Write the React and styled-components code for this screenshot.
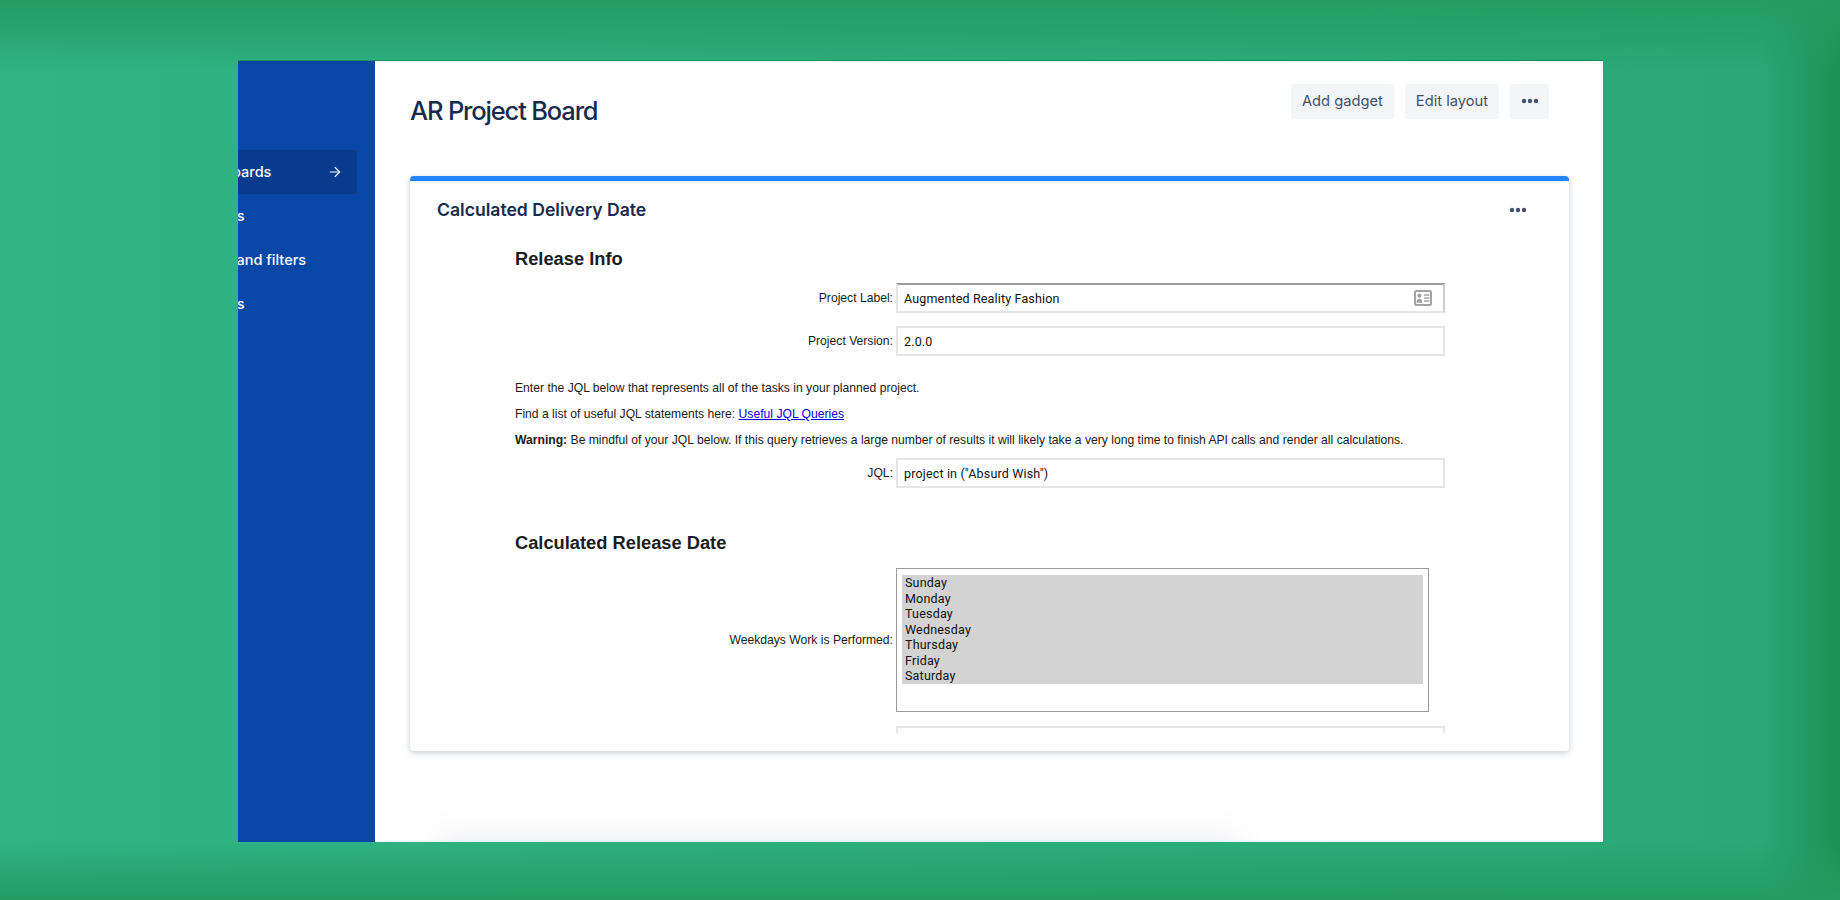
import styled, { createGlobalStyle } from 'styled-components';
import { ArrowRight } from 'lucide-react';

const GlobalStyle = createGlobalStyle`
  html, body {
    margin: 0;
    padding: 0;
  }
  * {
    box-sizing: border-box;
  }
`;

const Backdrop = styled.div`
  width: 1840px;
  height: 900px;
  overflow: hidden;
  padding: 61px 237px 58px 238px;
  background:
    linear-gradient(180deg, #229c62 0, rgba(34, 156, 98, 0) 72px),
    linear-gradient(0deg, #229c62 0, rgba(34, 156, 98, 0) 58px),
    linear-gradient(270deg, #1b9156 0, rgba(27, 145, 86, 0) 80px),
    linear-gradient(90deg, #30b385 0, #2ba876 100%);
`;

const Window = styled.div`
  height: 781px;
  display: flex;
  box-shadow: 0 -1px 0 rgba(20, 120, 70, 0.6);
`;

const Sidebar = styled.nav`
  width: 137px;
  flex: none;
  overflow: hidden;
  background: #0847a6;
  padding: 89px 18px 0 0;
`;

const NavRow = styled.div`
  height: 44px;
  margin-left: -67px;
  padding: 0 14px 1px 17px;
  display: flex;
  align-items: center;
  justify-content: space-between;
  border-radius: 3px;
  color: #fff;
  font: 500 14.5px "Inter", sans-serif;
  white-space: nowrap;
  background: ${props => (props.$active ? '#073b8e' : 'transparent')};
`;

const Main = styled.main`
  flex: 1;
  background: #fff;
  padding: 0 34px 0 35px;
  overflow: hidden;
`;

const Header = styled.header`
  height: 115px;
  display: flex;
  justify-content: space-between;
  padding-top: 23px;
`;

const Title = styled.h1`
  margin: 0;
  font: 500 25.5px/54px "Inter", sans-serif;
  letter-spacing: -1.17px;
  color: #172b4d;
`;

const Actions = styled.div`
  display: flex;
  gap: 11px;
  padding-right: 20px;
`;

const Button = styled.button`
  height: 35px;
  border: 0;
  border-radius: 3px;
  padding: 0 ${props => (props.$icon ? '0' : '11px')} 2px;
  width: ${props => (props.$icon ? '39px' : 'auto')};
  display: flex;
  align-items: center;
  justify-content: center;
  background: #f4f5f7;
  color: #42526e;
  font: 400 14.7px "Inter", sans-serif;
`;

const Card = styled.section`
  height: 575px;
  border-top: 5px solid #2684ff;
  border-radius: 4px;
  background: #fff;
  box-shadow: 0 2px 6px rgba(9, 30, 66, 0.22);
  padding: 0 27px 18px;
  display: flex;
  flex-direction: column;
`;

const CardHeader = styled.div`
  height: 57px;
  flex: none;
  display: flex;
  align-items: center;
  justify-content: space-between;
  padding-right: 15px;
`;

const CardTitle = styled.h2`
  margin: 0;
  font: 600 17.6px "Inter", sans-serif;
  color: #172b4d;
`;

const Gadget = styled.div`
  flex: 1;
  overflow: hidden;
  padding: 9px 0 0 78px;
  font: 12.15px "Liberation Sans", sans-serif;
  color: #1a1a1a;
`;

const SectionTitle = styled.h3`
  margin: 0 0 ${props => props.$after || 12}px 0;
  font: 700 18.3px/24px "Liberation Sans", sans-serif;
  color: #1c1c1c;
`;

const FormRow = styled.div`
  display: grid;
  grid-template-columns: 378px 549px;
  column-gap: 3px;
  align-items: center;
  margin-top: ${props => props.$before || 0}px;
  margin-bottom: ${props => props.$after || 0}px;
`;

const Label = styled.label`
  text-align: right;
`;

const Field = styled.div`
  height: 30px;
  display: flex;
  align-items: center;
  justify-content: space-between;
  padding: 0 11px 0 6px;
  background: #fff;
  border: 2px solid #e6e6e6;
  border-top-color: ${props => (props.$focus ? '#9a9a9a' : '#e6e6e6')};
  border-right-color: ${props => (props.$focus ? '#cfcfcf' : '#e6e6e6')};
  font: 12.5px "Roboto", sans-serif;
  letter-spacing: 0.16px;
  color: #111;
`;

const Note = styled.p`
  margin: 0;
  line-height: 26px;
`;

const ListBox = styled.div`
  width: 533px;
  height: 144px;
  border: 1px solid #9a9a9a;
  padding: 6px 5px;
`;

const Option = styled.div`
  height: 15.5px;
  padding-left: 3px;
  background: #d3d3d3;
  font: 12.5px/15.5px "Roboto", sans-serif;
  letter-spacing: 0.2px;
  color: #111;
`;

const NextCard = styled.div`
  height: 60px;
  margin: 91px 334px 0 30px;
  box-shadow: 0 0 40px rgba(9, 30, 66, 0.1);
`;

const Dots = () => (
  <svg width="18" height="6" viewBox="0 0 18 6" fill="#42526e">
    <circle cx="3" cy="3" r="2.2" />
    <circle cx="9" cy="3" r="2.2" />
    <circle cx="15" cy="3" r="2.2" />
  </svg>
);

const ContactIcon = () => (
  <svg width="18" height="16" viewBox="0 0 18 16">
    <rect x="1" y="1" width="16" height="14" rx="1.5" fill="none" stroke="#a3a3a3" strokeWidth="2" />
    <circle cx="5.4" cy="5.6" r="2.1" fill="#a3a3a3" />
    <path d="M2.4 12.8c0-2.8 1.2-4 3-4s3 1.2 3 4z" fill="#a3a3a3" />
    <path d="M10 5h5.4M10 8h5.4M10 11h5.4" stroke="#a3a3a3" strokeWidth="1.6" />
  </svg>
);

const weekdays = ['Sunday', 'Monday', 'Tuesday', 'Wednesday', 'Thursday', 'Friday', 'Saturday'];

export default function App() {
  return (
    <>
      <GlobalStyle />
      <Backdrop>
        <Window>
          <Sidebar>
            <NavRow $active>
              Dashboards
              <ArrowRight size={16} strokeWidth={1.75} />
            </NavRow>
            <NavRow>Projects</NavRow>
            <NavRow>Issues and filters</NavRow>
            <NavRow>Projects</NavRow>
          </Sidebar>
          <Main>
            <Header>
              <Title>AR Project Board</Title>
              <Actions>
                <Button>Add gadget</Button>
                <Button>Edit layout</Button>
                <Button $icon><Dots /></Button>
              </Actions>
            </Header>
            <Card>
              <CardHeader>
                <CardTitle>Calculated Delivery Date</CardTitle>
                <Dots />
              </CardHeader>
              <Gadget>
                <SectionTitle>Release Info</SectionTitle>
                <FormRow $after={13}>
                  <Label>Project Label:</Label>
                  <Field $focus>
                    Augmented Reality Fashion
                    <ContactIcon />
                  </Field>
                </FormRow>
                <FormRow $after={19}>
                  <Label>Project Version:</Label>
                  <Field>2.0.0</Field>
                </FormRow>
                <Note>Enter the JQL below that represents all of the tasks in your planned project.</Note>
                <Note>Find a list of useful JQL statements here: <a href="#">Useful JQL Queries</a></Note>
                <Note><b>Warning:</b> Be mindful of your JQL below. If this query retrieves a large number of results it will likely take a very long time to finish API calls and render all calculations.</Note>
                <FormRow $before={5} $after={43}>
                  <Label>JQL:</Label>
                  <Field>project in ("Absurd Wish")</Field>
                </FormRow>
                <SectionTitle $after={13}>Calculated Release Date</SectionTitle>
                <FormRow $after={14}>
                  <Label>Weekdays Work is Performed:</Label>
                  <ListBox>
                    {weekdays.map(day => <Option key={day}>{day}</Option>)}
                  </ListBox>
                </FormRow>
                <FormRow>
                  <span />
                  <Field />
                </FormRow>
              </Gadget>
            </Card>
            <NextCard />
          </Main>
        </Window>
      </Backdrop>
    </>
  );
}
